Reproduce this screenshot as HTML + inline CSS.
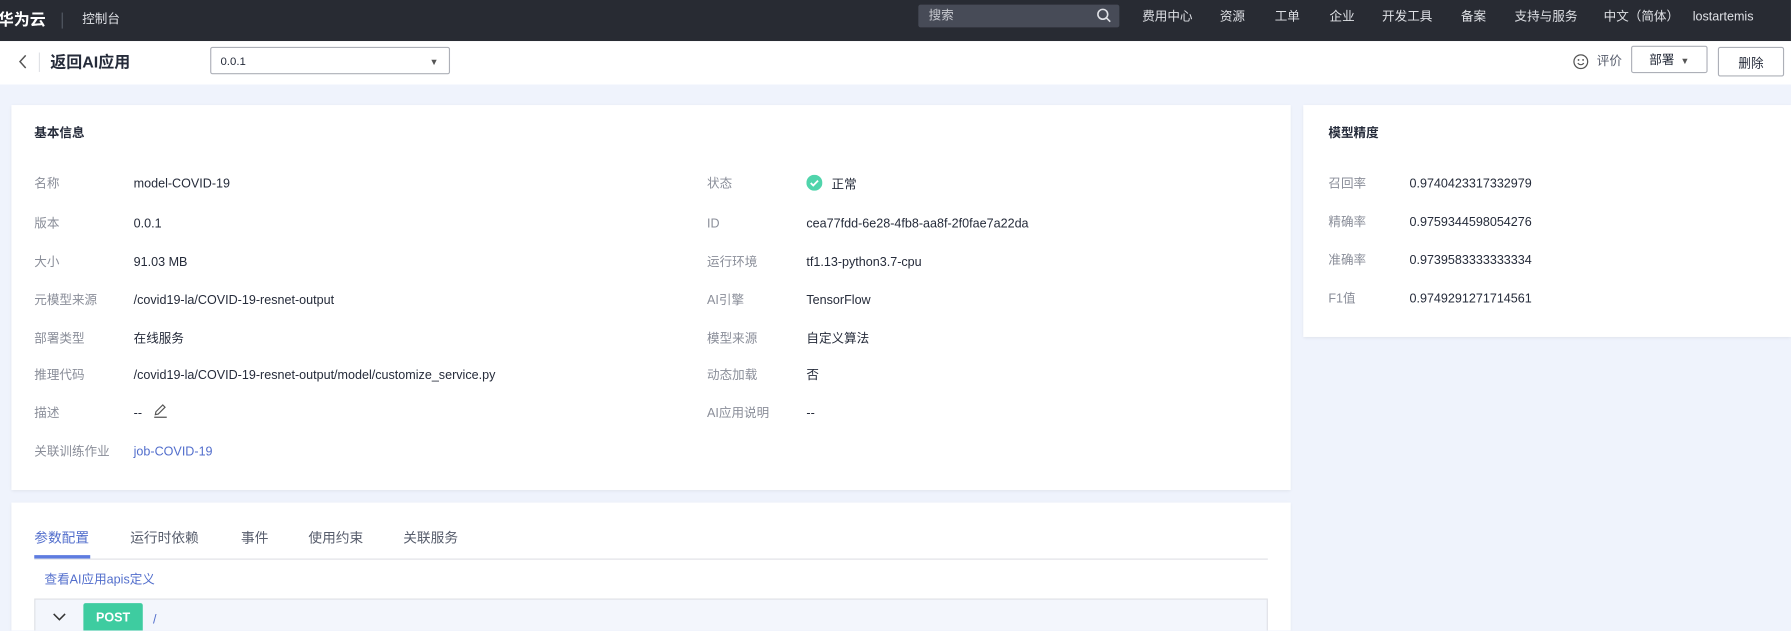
<!DOCTYPE html>
<html><head><meta charset="utf-8"><style>
*{margin:0;padding:0;box-sizing:border-box}
html,body{width:1791px;height:630px;overflow:hidden;background:#eff3fc}
body{font-family:"Liberation Sans","Noto Sans CJK SC",sans-serif;}
#w{position:absolute;left:0;top:0;width:1568px;height:552px;overflow:hidden;transform:scale(1.1422);transform-origin:0 0;font-size:11px;color:#252b3a}
.a{position:absolute;white-space:nowrap;line-height:17px}
.top{position:absolute;left:0;top:0;width:1568px;height:36px;background:#282b33;color:#dfe1e6}
.bar{position:absolute;left:0;top:36px;width:1568px;height:38px;background:#fff}
.card{position:absolute;background:#fff;box-shadow:0 1px 3px rgba(0,0,0,.08)}
.l{color:#8a8e99}
.btn{position:absolute;border:1px solid #adb0b8;border-radius:2px;background:#fff;text-align:center}
</style></head><body><div id="w">
<div class="top">
 <div class="a" style="left:-2px;top:9px;font-size:14px;font-weight:bold;color:#fff">华为云</div>
 <div class="a" style="left:54px;top:11px;width:1px;height:14px;background:#555a66"></div>
 <div class="a" style="left:72px;top:9px">控制台</div>
 <div class="a" style="left:804px;top:4px;width:176px;height:20px;background:#474b57;border-radius:2px"></div>
 <div class="a" style="left:813px;top:6px;color:#c8cad0">搜索</div>
 <svg class="a" style="left:960px;top:7px" width="13" height="13" viewBox="0 0 13 13"><circle cx="5.5" cy="5.5" r="4.3" fill="none" stroke="#dfe1e6" stroke-width="1.4"/><path d="M8.6 8.6L12 12" stroke="#dfe1e6" stroke-width="1.4"/></svg>
 <div class="a" style="left:1000px;top:7px">费用中心</div>
 <div class="a" style="left:1068px;top:7px">资源</div>
 <div class="a" style="left:1116px;top:7px">工单</div>
 <div class="a" style="left:1164px;top:7px">企业</div>
 <div class="a" style="left:1210px;top:7px">开发工具</div>
 <div class="a" style="left:1279px;top:7px">备案</div>
 <div class="a" style="left:1326px;top:7px">支持与服务</div>
 <div class="a" style="left:1404px;top:7px">中文（简体）</div>
 <div class="a" style="left:1482px;top:7px">lostartemis</div>
</div>
<div class="bar">
 <svg class="a" style="left:16px;top:11px" width="8" height="14" viewBox="0 0 8 14"><path d="M6.5 1.5L1.5 7l5 5.5" fill="none" stroke="#555" stroke-width="1.3"/></svg>
 <div class="a" style="left:34px;top:10px;width:1px;height:17px;background:#dfe1e6"></div>
 <div class="a" style="left:44px;top:10px;font-size:14px;font-weight:bold;line-height:17px">返回AI应用</div>
 <div class="a" style="left:184px;top:5px;width:210px;height:24px;border:1px solid #adb0b8;border-radius:2px"></div>
 <div class="a" style="left:193px;top:10px;font-size:10px">0.0.1</div>
 <div class="a" style="left:376px;top:10px;font-size:8px;color:#555">▼</div>
 <svg class="a" style="left:1377px;top:11px" width="14" height="14" viewBox="0 0 14 14"><circle cx="7" cy="7" r="6" fill="none" stroke="#555" stroke-width="1.1"/><circle cx="5" cy="5.5" r=".8" fill="#555"/><circle cx="9" cy="5.5" r=".8" fill="#555"/><path d="M4.3 8.3Q7 11 9.7 8.3" fill="none" stroke="#555" stroke-width="1"/></svg>
 <div class="a" style="left:1398px;top:10px;color:#575d6c">评价</div>
 <div class="btn" style="left:1428px;top:4px;width:67px;height:24px;line-height:24px">部署 <span style="font-size:8px;color:#555">&nbsp;▼</span></div>
 <div class="btn" style="left:1504px;top:5px;width:58px;height:26px;line-height:28px">删除</div>
</div>
<div class="card" style="left:10px;top:92px;width:1120px;height:337px">
 <div class="a" style="left:20px;top:17px;font-weight:bold">基本信息</div>
 <div class="a l" style="left:20px;top:61px">名称</div><div class="a" style="left:107px;top:61px">model-COVID-19</div>
 <div class="a l" style="left:20px;top:96px">版本</div><div class="a" style="left:107px;top:96px">0.0.1</div>
 <div class="a l" style="left:20px;top:130px">大小</div><div class="a" style="left:107px;top:130px">91.03 MB</div>
 <div class="a l" style="left:20px;top:163px">元模型来源</div><div class="a" style="left:107px;top:163px">/covid19-la/COVID-19-resnet-output</div>
 <div class="a l" style="left:20px;top:197px">部署类型</div><div class="a" style="left:107px;top:197px">在线服务</div>
 <div class="a l" style="left:20px;top:229px">推理代码</div><div class="a" style="left:107px;top:229px">/covid19-la/COVID-19-resnet-output/model/customize_service.py</div>
 <div class="a l" style="left:20px;top:262px">描述</div><div class="a" style="left:107px;top:262px">--</div>
 <svg class="a" style="left:124px;top:261px" width="13" height="13" viewBox="0 0 13 13"><path d="M2 10l.5-2.5L8.5 1.5l2 2-6 6zM1 12.3h11" fill="none" stroke="#555" stroke-width="1"/></svg>
 <div class="a l" style="left:20px;top:296px">关联训练作业</div><div class="a" style="left:107px;top:296px;color:#526ecc">job-COVID-19</div>
 <div class="a l" style="left:609px;top:61px">状态</div>
 <svg class="a" style="left:696px;top:61px" width="14" height="14" viewBox="0 0 14 14"><circle cx="7" cy="7" r="7" fill="#50d4ab"/><path d="M3.8 7.2l2.2 2.2 4.2-4.3" fill="none" stroke="#fff" stroke-width="1.6"/></svg>
 <div class="a" style="left:718px;top:62px">正常</div>
 <div class="a l" style="left:609px;top:96px">ID</div><div class="a" style="left:696px;top:96px">cea77fdd-6e28-4fb8-aa8f-2f0fae7a22da</div>
 <div class="a l" style="left:609px;top:130px">运行环境</div><div class="a" style="left:696px;top:130px">tf1.13-python3.7-cpu</div>
 <div class="a l" style="left:609px;top:163px">AI引擎</div><div class="a" style="left:696px;top:163px">TensorFlow</div>
 <div class="a l" style="left:609px;top:197px">模型来源</div><div class="a" style="left:696px;top:197px">自定义算法</div>
 <div class="a l" style="left:609px;top:229px">动态加载</div><div class="a" style="left:696px;top:229px">否</div>
 <div class="a l" style="left:609px;top:262px">AI应用说明</div><div class="a" style="left:696px;top:262px">--</div>
</div>
<div class="card" style="left:1141px;top:92px;width:427px;height:203px">
 <div class="a" style="left:22px;top:17px;font-weight:bold">模型精度</div>
 <div class="a l" style="left:22px;top:61px">召回率</div><div class="a" style="left:93px;top:61px">0.9740423317332979</div>
 <div class="a l" style="left:22px;top:95px">精确率</div><div class="a" style="left:93px;top:95px">0.9759344598054276</div>
 <div class="a l" style="left:22px;top:128px">准确率</div><div class="a" style="left:93px;top:128px">0.9739583333333334</div>
 <div class="a l" style="left:22px;top:162px">F1值</div><div class="a" style="left:93px;top:162px">0.9749291271714561</div>
</div>
<div class="card" style="left:10px;top:440px;width:1120px;height:140px">
 <div class="a" style="left:20px;top:23px;color:#526ecc;font-size:12px">参数配置</div>
 <div class="a" style="left:104px;top:23px;color:#575d6c;font-size:12px">运行时依赖</div>
 <div class="a" style="left:201px;top:23px;color:#575d6c;font-size:12px">事件</div>
 <div class="a" style="left:260px;top:23px;color:#575d6c;font-size:12px">使用约束</div>
 <div class="a" style="left:343px;top:23px;color:#575d6c;font-size:12px">关联服务</div>
 <div class="a" style="left:20px;top:49px;width:1080px;height:1px;background:#dfe1e6"></div>
 <div class="a" style="left:20px;top:46px;width:49px;height:3px;background:#5e7ce0"></div>
 <div class="a" style="left:29px;top:60px;color:#526ecc">查看AI应用apis定义</div>
 <div class="a" style="left:20px;top:84px;width:1080px;height:40px;background:#f3f6fc;border:1px solid #dfe1e6"></div>
 <svg class="a" style="left:36px;top:96px" width="12" height="8" viewBox="0 0 12 8"><path d="M1 1.5l5 5 5-5" fill="none" stroke="#333" stroke-width="1.3"/></svg>
 <div class="a" style="left:63px;top:88px;width:52px;height:26px;background:#3ecca0;border-radius:2px;color:#fff;font-weight:bold;text-align:center;line-height:26px;font-size:11px">POST</div>
 <div class="a" style="left:124px;top:95px;color:#526ecc">/</div>
</div>
</div></body></html>
